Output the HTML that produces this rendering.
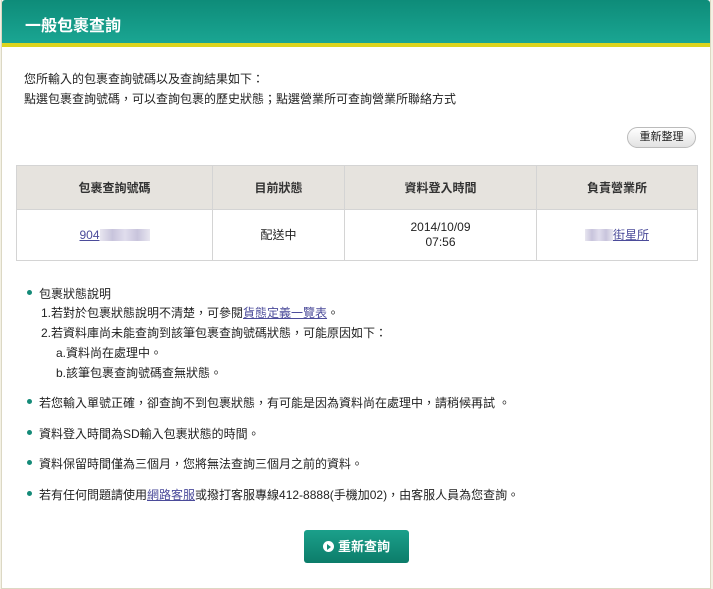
<!DOCTYPE html>
<html><head><meta charset="utf-8"><style>
*{margin:0;padding:0;box-sizing:border-box}
body{width:713px;height:589px;background:#f3f1e4;font-family:"Liberation Sans","Noto Sans CJK TC",sans-serif;font-size:12px;color:#222;overflow:hidden;position:relative}
.frame{position:absolute;left:1px;top:0;width:710px;height:589px;background:#fff;border:1px solid #dcd8c4;border-top:none}
.hdr{position:absolute;left:0;top:0;width:100%;height:44px;background:linear-gradient(#0e8c79,#1aa693);border-radius:3px 3px 0 0}
.hdr span{position:absolute;left:23px;top:12px;color:#fff;font-size:16px;font-weight:bold}
.yl{position:absolute;left:0;top:43px;width:100%;height:4px;background:#dcd41e}
.t{position:absolute;left:22px;font-size:12px;white-space:nowrap}
.btn1{position:absolute;left:625px;top:127px;width:69px;height:21px;border:1px solid #bbb;border-radius:11px;background:linear-gradient(#fff,#e2e2e2);font-size:11px;text-align:center;line-height:19px}
table{position:absolute;left:14px;top:165px;width:682px;border-collapse:collapse}
td,th{border:1px solid #d4d4d4;text-align:center;font-size:12px}
th{background:#e6e3de;height:44px;font-weight:bold;color:#333}
td{height:51px;line-height:15px}
a{color:#4b4b9a;text-decoration:underline}
.blur{display:inline-block;width:50px;height:12px;background:linear-gradient(90deg,#e8e6f0,#c8c4dc,#e0dded,#c8c4dc,#e8e6f0);vertical-align:middle}
.dot{position:absolute;left:25px;width:5px;height:5px;border-radius:50%;background:#148a78}
.btn2{position:absolute;left:302px;top:530px;width:105px;height:33px;background:linear-gradient(#1ba08b,#0c7c6a);border-radius:3px;color:#fff;font-weight:bold;font-size:13px;text-align:center;line-height:33px}
.btn2 i{display:inline-block;width:11px;height:11px;border-radius:50%;background:#fff;vertical-align:-1px;margin-right:4px;position:relative}
.btn2 i:after{content:"";position:absolute;left:4px;top:2.5px;border-left:4px solid #0f8a76;border-top:3px solid transparent;border-bottom:3px solid transparent}
</style></head><body>
<div class="frame">
<div class="hdr"><span>一般包裹查詢</span></div><div class="yl"></div>
<div class="t" style="top:70px">您所輸入的包裹查詢號碼以及查詢結果如下：</div>
<div class="t" style="top:90px">點選包裹查詢號碼，可以查詢包裹的歷史狀態；點選營業所可查詢營業所聯絡方式</div>
<div class="btn1">重新整理</div>
<table>
<tr><th style="width:196px">包裹查詢號碼</th><th style="width:132px">目前狀態</th><th style="width:192px">資料登入時間</th><th>負責營業所</th></tr>
<tr><td><a>904</a><span class="blur"></span></td><td>配送中</td><td>2014/10/09<br>07:56</td><td><span class="blur" style="width:28px"></span><a>街星所</a></td></tr>
</table>
<div class="dot" style="top:290px"></div><div class="t" style="top:285px;left:37px">包裹狀態說明</div>
<div class="t" style="top:304px;left:39px">1.若對於包裹狀態說明不清楚，可參閱<a>貨態定義一覽表</a>。</div>
<div class="t" style="top:324px;left:39px">2.若資料庫尚未能查詢到該筆包裹查詢號碼狀態，可能原因如下：</div>
<div class="t" style="top:344px;left:54px">a.資料尚在處理中。</div>
<div class="t" style="top:364px;left:54px">b.該筆包裹查詢號碼查無狀態。</div>
<div class="dot" style="top:399px"></div><div class="t" style="top:394px;left:37px">若您輸入單號正確，卻查詢不到包裹狀態，有可能是因為資料尚在處理中，請稍候再試 。</div>
<div class="dot" style="top:430px"></div><div class="t" style="top:425px;left:37px">資料登入時間為SD輸入包裹狀態的時間。</div>
<div class="dot" style="top:460px"></div><div class="t" style="top:455px;left:37px">資料保留時間僅為三個月，您將無法查詢三個月之前的資料。</div>
<div class="dot" style="top:491px"></div><div class="t" style="top:486px;left:37px">若有任何問題請使用<a>網路客服</a>或撥打客服專線412-8888(手機加02)，由客服人員為您查詢。</div>
<div class="btn2"><i></i>重新查詢</div>
</div>
</body></html>
